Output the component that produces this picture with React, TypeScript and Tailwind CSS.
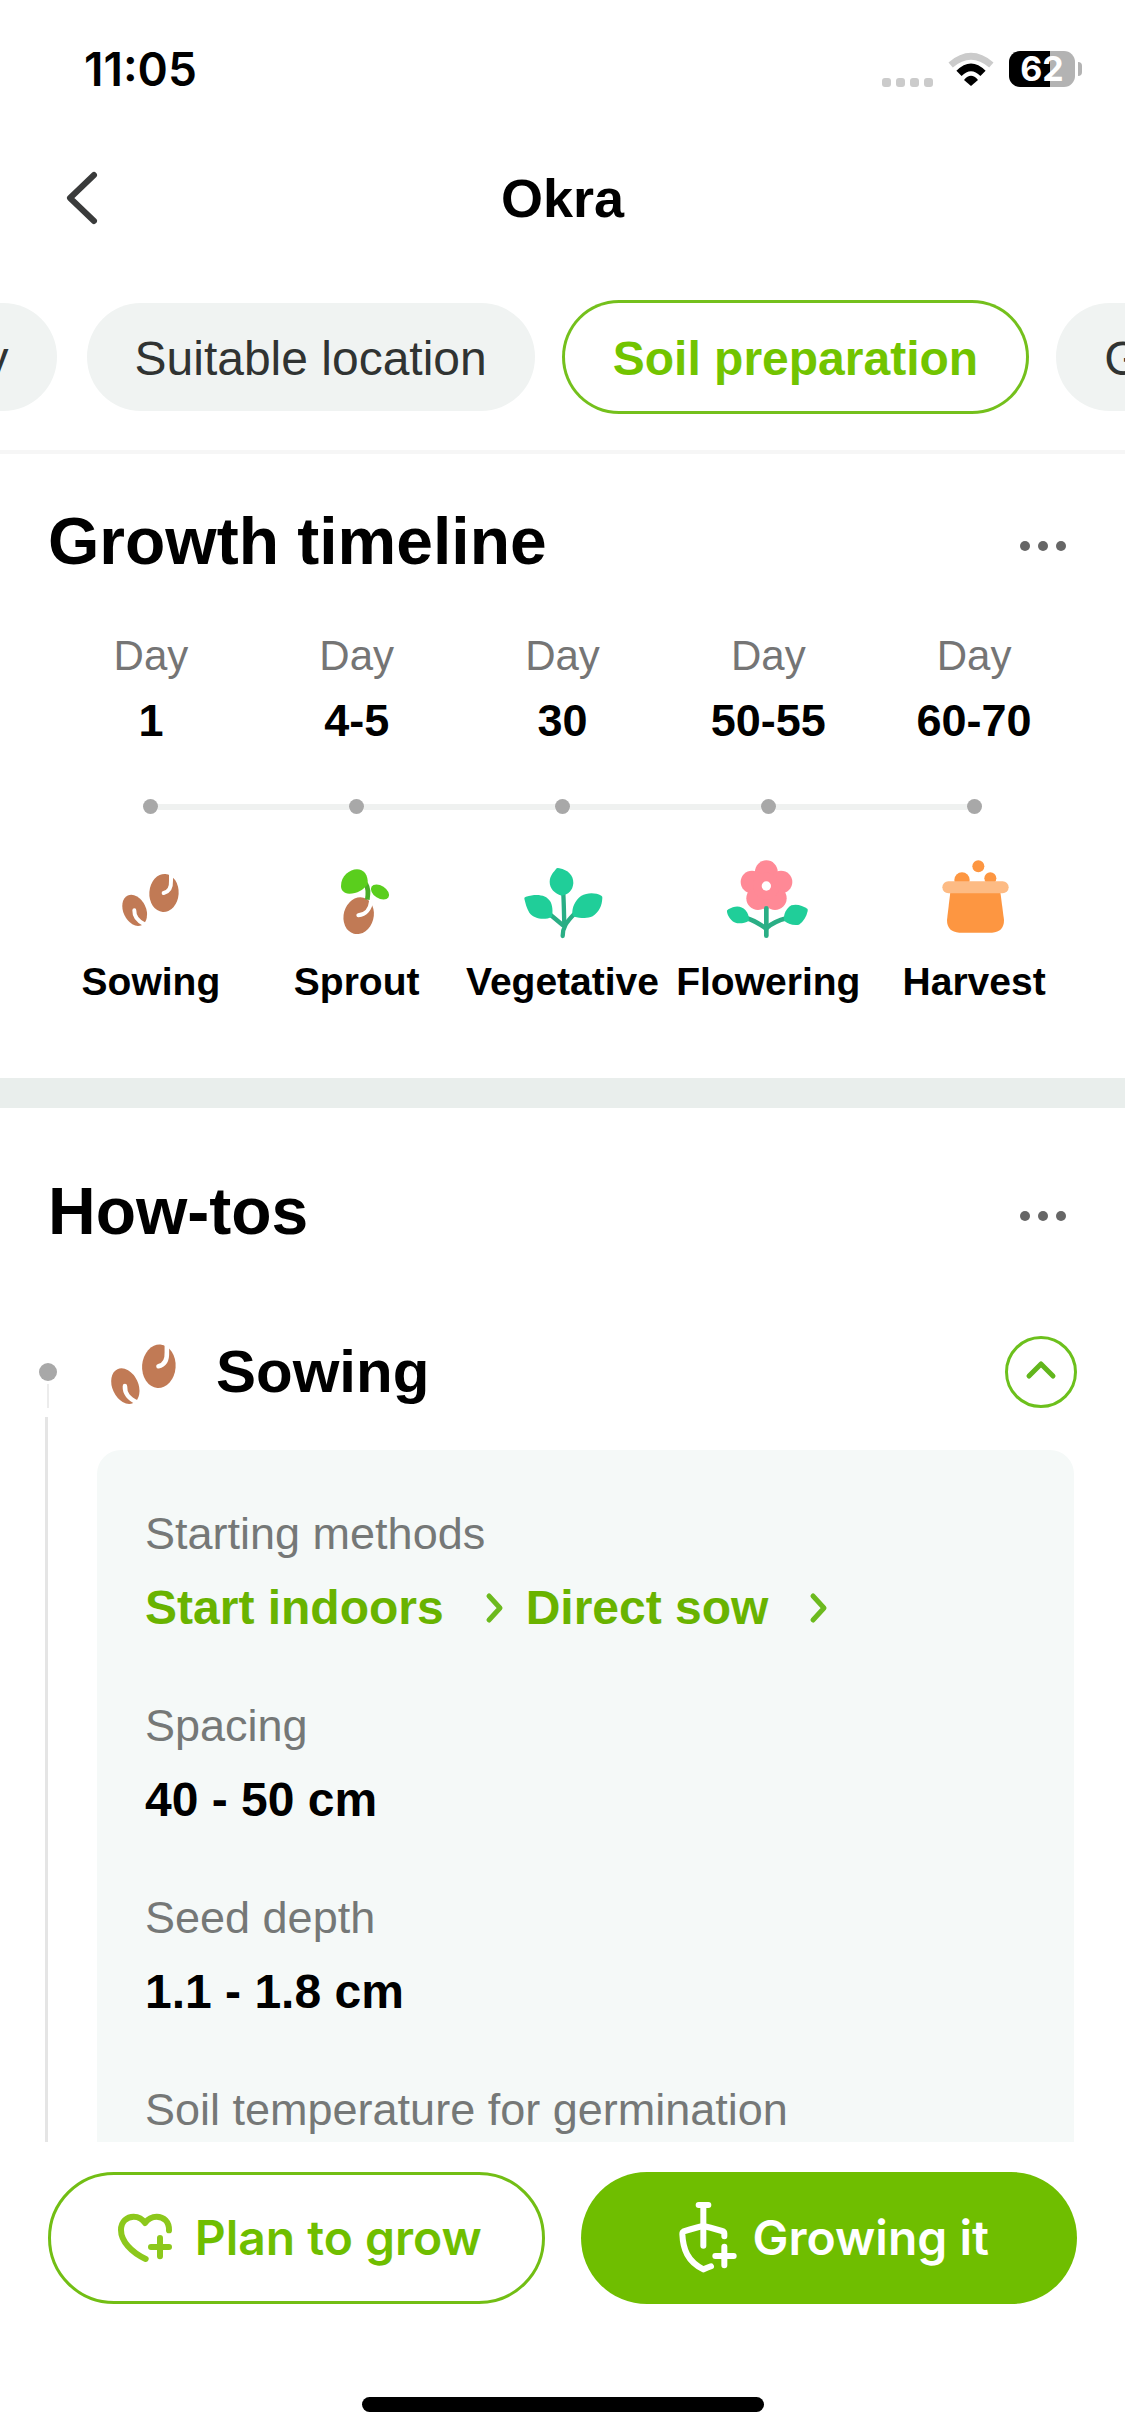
import React, { useEffect, useRef, useState } from 'react';

const INTER = "font-['Inter','Liberation_Sans',sans-serif]";

const tabs = ['Difficulty', 'Suitable location', 'Soil preparation', 'Growing tips'];

const SeedsIcon: React.FC<{ className?: string }> = ({ className }) => (
  <svg viewBox="87 48 252 252" className={className} aria-hidden="true">
    <ellipse cx="252" cy="159" rx="44" ry="57" transform="rotate(4 252 159)" fill="#c17a55" />
    <path d="M251 159C266 156 274 143 273 122V98" fill="none" stroke="#fff" strokeWidth="12" strokeLinecap="round" />
    <ellipse cx="164" cy="211" rx="34" ry="49" transform="rotate(-25 164 211)" fill="#c17a55" />
    <path d="M163 211C162 231 172 243 195 254" fill="none" stroke="#fff" strokeWidth="12" strokeLinecap="round" />
  </svg>
);

const SproutIcon: React.FC<{ className?: string }> = ({ className }) => (
  <svg viewBox="704 48 252 252" className={className} aria-hidden="true">
    <ellipse cx="835" cy="227" rx="45" ry="56" transform="rotate(15 835 227)" fill="#c17a55" />
    <path d="M834 226C856 223 870 207 872 184" fill="none" stroke="#fff" strokeWidth="12" strokeLinecap="round" />
    <path d="M856 130C865 145 864 158 861 179" fill="none" stroke="#49ae28" strokeWidth="14" />
    <path d="M782 138C782 108 808 88 830 88C850 88 864 104 862 132C850 150 830 161 807 161C790 160 782 151 782 138Z" fill="#5ace1d" />
    <ellipse cx="899" cy="156" rx="30" ry="19" transform="rotate(33 899 156)" fill="#5ace1d" />
  </svg>
);

const VegetativeIcon: React.FC<{ className?: string }> = ({ className }) => (
  <svg viewBox="1322 48 252 252" className={className} aria-hidden="true">
    <g fill="none" stroke="#2aae85" strokeWidth="13" strokeLinecap="round">
      <path d="M1452 162C1454 200 1454 230 1455 255" />
      <path d="M1484 223C1462 246 1450 262 1450 288" />
      <path d="M1414 225L1450 255" />
    </g>
    <g fill="#20ce99">
      <path d="M1432 85Q1435 83 1440 85C1466 90 1483 106 1482 130C1480 152 1467 164 1447 167C1425 160 1411 145 1411 125C1412 105 1424 96 1432 85Z" />
      <path d="M1335 176Q1334 171 1340 170C1372 160 1400 164 1412 183C1420 195 1421 215 1418 230C1395 242 1365 237 1350 218C1341 203 1339 190 1335 176Z" />
      <path d="M1566 167Q1570 169 1569 174C1568 197 1560 215 1540 229C1522 238 1500 233 1485 230Q1480 229 1479 222C1478 202 1487 182 1505 168C1525 157 1548 158 1566 167Z" />
    </g>
  </svg>
);

const FloweringIcon: React.FC<{ className?: string }> = ({ className }) => (
  <svg viewBox="499 48 252 252" className={className} aria-hidden="true">
    <g fill="#ff8996">
      <circle cx="620" cy="95" r="34" />
      <circle cx="577" cy="126" r="34" />
      <circle cx="664" cy="126" r="34" />
      <circle cx="595" cy="175" r="35" />
      <circle cx="646" cy="175" r="35" />
      <circle cx="620" cy="138" r="40" />
    </g>
    <circle cx="620" cy="138" r="14" fill="#fff" />
    <g fill="none" stroke="#2aae85" strokeWidth="14" strokeLinecap="round">
      <path d="M620 205V287" />
      <path d="M560 234C585 242 603 254 619 265C635 252 655 241 680 235" />
    </g>
    <g fill="#20ce99">
      <path d="M502 216Q500 211 506 208C524 196 545 196 557 210C566 220 568 230 568 242C548 254 525 252 515 240C507 232 504 225 502 216Z" />
      <path d="M743 206Q745 208 744 213C740 231 732 244 718 254C700 258 683 250 673 242C671 222 680 205 695 196C712 190 730 198 743 206Z" />
    </g>
  </svg>
);

const HarvestIcon: React.FC<{ className?: string }> = ({ className }) => (
  <svg viewBox="1116 48 252 252" className={className} aria-hidden="true">
    <g fill="#fd9641">
      <circle cx="1255" cy="79" r="18" />
      <circle cx="1206" cy="120" r="23" />
      <circle cx="1291" cy="115" r="18" />
      <path d="M1171 156L1161 240Q1161 276 1198 278H1296Q1332 276 1332 240L1321 156Z" />
    </g>
    <rect x="1147" y="124" width="199" height="36" rx="18" fill="#fdbb84" />
  </svg>
);

const HeartPlusIcon = () => (
  <svg
    viewBox="60 36 216 216"
    className="size-[72px]"
    fill="none"
    stroke="#8cc81c"
    strokeWidth="18"
    strokeLinecap="round"
    aria-hidden="true"
  >
    <path d="M164 207C120 186 90 153 90 120C90 94 108 80 128 80C143 80 155 88 162 99C170 88 182 80 197 80C218 80 235 95 234 121" strokeLinejoin="round" />
    <path d="M180 171H234M207 144V199" />
  </svg>
);

const ShovelPlusIcon = () => (
  <svg
    viewBox="86 66 216 216"
    className="size-[72px]"
    fill="none"
    stroke="#fff"
    strokeWidth="18"
    strokeLinecap="round"
    aria-hidden="true"
  >
    <path d="M175 75H204M189 75V197" />
    <path d="M252 169V160Q252 155 245 153C225 147 205 141 189 138C170 142 150 148 130 154Q126 156 126 162C128 208 142 245 189 268Q200 264 212 259" />
    <path d="M252 200V256M225 228H280" />
  </svg>
);

const LinkChevron = () => (
  <svg viewBox="0 0 36 36" className="size-9" fill="none" stroke="#6cba1e" strokeWidth="5" aria-hidden="true">
    <path d="M13 6L24 18L13 30" strokeLinecap="round" strokeLinejoin="round" />
  </svg>
);

const stages = [
  { name: 'Sowing', day: '1', Icon: SeedsIcon },
  { name: 'Sprout', day: '4-5', Icon: SproutIcon },
  { name: 'Vegetative', day: '30', Icon: VegetativeIcon },
  { name: 'Flowering', day: '50-55', Icon: FloweringIcon },
  { name: 'Harvest', day: '60-70', Icon: HarvestIcon },
];

const StatusBar = () => (
  <div className={`flex h-[138px] shrink-0 items-center justify-between pr-[43px] pl-[84px] ${INTER}`}>
    <span className="text-[46px] leading-none font-semibold">11:05</span>
    <div className="flex h-9 items-center">
      <div className="flex gap-[5px] self-end">
        {[0, 1, 2, 3].map((n) => (
          <span key={n} className="size-[9px] rounded-[3px] bg-[#cbcbcb]" />
        ))}
      </div>
      <svg viewBox="294 60 138 108" className="ml-[15px] h-9 w-[46px]" aria-hidden="true">
        <path d="M302 102Q363 50 424 102" fill="none" stroke="#cbcbcb" strokeWidth="20" />
        <path d="M327 127Q363 91 399 127" fill="none" stroke="#000" strokeWidth="22" />
        <path d="M363 165L342 147Q363 122 384 147Z" />
      </svg>
      <span className="ml-[15px] flex h-9 w-[66px] items-center justify-center rounded-[11px] bg-[linear-gradient(to_right,#000_62%,#b3b3b3_62%)] text-[34px] leading-none font-bold text-white">
        62
      </span>
      <span className="ml-[3px] h-3.5 w-1 rounded-r-full bg-[#b3b3b3]" />
    </div>
  </div>
);

const SectionHeader: React.FC<{ title: string }> = ({ title }) => (
  <div className="flex items-center justify-between px-12">
    <h2 className="text-[66px] leading-[78px] font-bold">{title}</h2>
    <button type="button" aria-label={`${title} options`} className="pr-2.5">
      <svg viewBox="0 0 48 48" className="size-12" fill="#666" aria-hidden="true">
        <circle cx="6" cy="29" r="5" />
        <circle cx="24" cy="29" r="5" />
        <circle cx="42" cy="29" r="5" />
      </svg>
    </button>
  </div>
);

const Detail: React.FC<{ label: string; children?: React.ReactNode }> = ({ label, children }) => (
  <div>
    <dt className="text-[45px] leading-[60px] text-[#757877]">{label}</dt>
    {children && <dd className="mt-2 text-[48px] leading-[72px] font-bold">{children}</dd>}
  </div>
);

const App: React.FC = () => {
  const [activeTab, setActiveTab] = useState('Soil preparation');
  const [open, setOpen] = useState(true);
  const tabsRef = useRef<HTMLElement>(null);

  useEffect(() => {
    if (tabsRef.current) {
      tabsRef.current.scrollLeft = 220;
    }
  }, []);

  return (
    <div className="flex h-screen flex-col bg-white font-['Liberation_Sans',Arial,sans-serif] text-black">
      <StatusBar />

      <header className="shrink-0 border-b-4 border-[#f6f6f6]">
        <div className="grid h-[120px] grid-cols-[1fr_auto_1fr] items-center px-12">
          <button type="button" aria-label="Back" className="justify-self-start">
            <svg viewBox="0 0 66 66" className="size-[66px]" fill="none" stroke="#3a3b3b" strokeWidth="6" aria-hidden="true">
              <path d="M46 10L22 33L46 56" strokeLinecap="round" strokeLinejoin="round" />
            </svg>
          </button>
          <h1 className="text-[54px] leading-none font-bold">Okra</h1>
        </div>
        <nav ref={tabsRef} className="flex gap-[30px] overflow-x-auto pt-[45px] pb-[39px] [scrollbar-width:none]">
          {tabs.map((tab) => (
            <button
              key={tab}
              type="button"
              onClick={() => setActiveTab(tab)}
              className={`h-[108px] shrink-0 rounded-full px-12 pt-1 text-[48px] leading-none whitespace-nowrap ${
                tab === activeTab
                  ? 'bg-white font-bold text-[#72c400] ring-3 ring-[#74c01c]'
                  : 'bg-[#f0f3f2] text-[#303332]'
              }`}
            >
              {tab}
            </button>
          ))}
        </nav>
      </header>

      <main className="min-h-0 flex-1 overflow-y-auto [scrollbar-width:none]">
        <section className="pt-12 pb-[68px]">
          <SectionHeader title="Growth timeline" />
          <ol className="mt-[46px] grid grid-cols-5 px-12">
            {stages.map(({ name, day, Icon }, index) => (
              <li key={name} className="flex flex-col items-center">
                <span className="text-[42px] leading-[60px] text-[#757575]">Day</span>
                <span className="text-[45px] leading-[70px] font-bold">{day}</span>
                <div className="mt-[43px] flex w-full items-center">
                  <span className={`h-1.5 flex-1 ${index === 0 ? '' : 'bg-[#eff1f0]'}`} />
                  <span className="size-[15px] rounded-full bg-[#a8a8a8]" />
                  <span className={`h-1.5 flex-1 ${index === stages.length - 1 ? '' : 'bg-[#eff1f0]'}`} />
                </div>
                <Icon className="mt-[42px] size-[84px]" />
                <span className="mt-3.5 text-[39px] leading-[56px] font-bold">{name}</span>
              </li>
            ))}
          </ol>
        </section>

        <div className="h-[30px] bg-[#e9eeec]" />

        <section className="pt-16">
          <SectionHeader title="How-tos" />

          <div className="mt-[86px] flex h-[72px] items-center pr-12 pl-[39px]">
            <div className="flex h-[72px] w-[18px] flex-col items-center justify-end gap-[3px]">
              <span className="size-[18px] rounded-full bg-[#a8a8a8]" />
              <span className="h-6 w-0.5 bg-[#ececec]" />
            </div>
            <SeedsIcon className="ml-[39px] size-24" />
            <h3 className="ml-6 text-[60px] leading-none font-bold">Sowing</h3>
            <button
              type="button"
              aria-label="Toggle sowing details"
              aria-expanded={open}
              onClick={() => setOpen(!open)}
              className="ml-auto flex size-[72px] items-center justify-center rounded-full border-3 border-[#6cc01c]"
            >
              <svg viewBox="0 0 36 36" className="size-9" fill="none" stroke="#62b61c" strokeWidth="5" aria-hidden="true">
                <path d="M6 22L18 10L30 22" strokeLinecap="round" strokeLinejoin="round" />
              </svg>
            </button>
          </div>

          {open && (
            <div className="flex pr-[51px] pl-[39px]">
              <div className="flex w-[18px] pt-[9px] pl-1.5">
                <span className="w-[3px] bg-[#e5e5e5]" />
              </div>
              <dl className="mt-[42px] ml-10 flex flex-1 flex-col gap-[52px] rounded-3xl bg-[#f5f9f8] px-12 py-[54px]">
                <Detail label="Starting methods">
                  <span className="flex gap-3.5 text-[#69b300]">
                    <a href="#start-indoors" className="flex items-center gap-8">
                      Start indoors
                      <LinkChevron />
                    </a>
                    <a href="#direct-sow" className="flex items-center gap-8">
                      Direct sow
                      <LinkChevron />
                    </a>
                  </span>
                </Detail>
                <Detail label="Spacing">40 - 50 cm</Detail>
                <Detail label="Seed depth">1.1 - 1.8 cm</Detail>
                <Detail label="Soil temperature for germination" />
              </dl>
            </div>
          )}
        </section>
      </main>

      <footer className="shrink-0 pt-[30px] pb-6">
        <div className={`grid grid-cols-2 gap-9 px-12 text-[48px] leading-none font-semibold ${INTER}`}>
          <button
            type="button"
            className="flex h-[132px] items-center justify-center gap-3 rounded-full border-3 border-[#72be14] text-[#6fbe00]"
          >
            <HeartPlusIcon />
            Plan to grow
          </button>
          <button
            type="button"
            className="flex h-[132px] items-center justify-center gap-3 rounded-full bg-[#6fbe00] text-white"
          >
            <ShovelPlusIcon />
            Growing it
          </button>
        </div>
        <div className="mx-auto mt-[93px] h-[15px] w-[402px] rounded-full bg-black" />
      </footer>
    </div>
  );
};

export default App;
